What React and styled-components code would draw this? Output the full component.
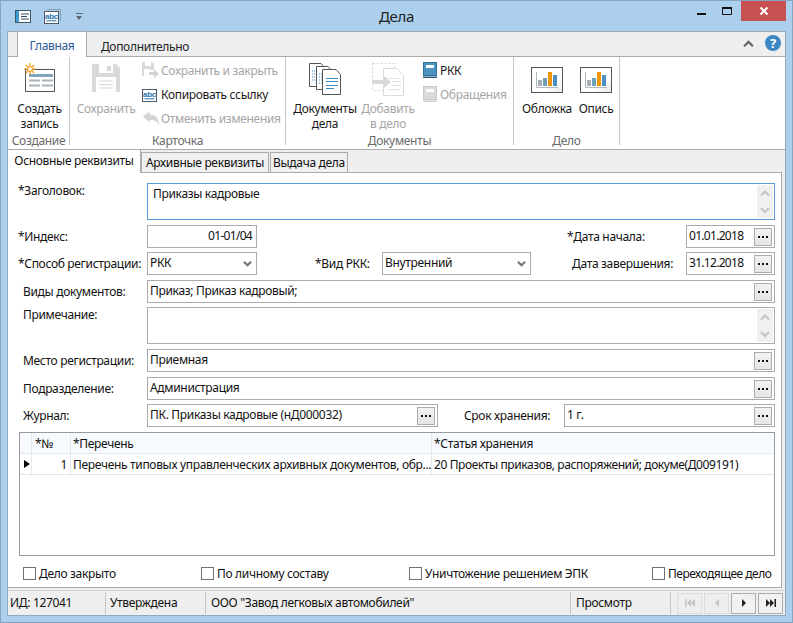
import React from "react";
import styled, { createGlobalStyle } from "styled-components";

const GlobalStyle = createGlobalStyle`
  html, body { margin: 0; padding: 0; overflow: hidden; }
  body { font-family: "Noto Sans", "Open Sans", sans-serif; font-size: 12px; letter-spacing: -0.32px; color: #111; }
`;

const CardIcon = () => (
  <svg width="16" height="13" viewBox="0 0 16 13">
    <rect x="0.5" y="0.5" width="15" height="12" fill="#fff" stroke="#3e5566" />
    <rect x="1" y="1" width="3" height="11" fill="#3f9ad0" />
    <path d="M6 4h8M6 6.5h6M6 9h8" stroke="#2b4a63" strokeWidth="1.2" />
  </svg>
);

const AbcIcon = ({ back = true }) => (
  <svg width="17" height="15" viewBox="0 0 17 15">
    {back && <path d="M3 .5h13.5v11" fill="none" stroke="#7f9db5" />}
    <rect x="0.5" y="2.5" width="14" height="12" fill="#fff" stroke="#4b5a66" />
    <text x="7.5" y="9.5" fontSize="8" fontWeight="700" textAnchor="middle" fill="#2a6fa8" fontFamily="Liberation Sans, sans-serif">abc</text>
    <path d="M2.5 11.8h10" stroke="#2a6fa8" />
  </svg>
);

const NewRecordIcon = () => (
  <svg width="34" height="30" viewBox="0 0 34 30">
    <rect x="2.5" y="7.5" width="29" height="22" fill="#fff" stroke="#555" />
    <rect x="6" y="12" width="24" height="3" fill="#7fa5bb" />
    <path d="M6 18.5h11M19 18.5h11M6 23.5h11M19 23.5h11" stroke="#a8b3ba" strokeWidth="2" />
    <path d="M7 1v12M1 7h12M2.8 2.8l8.4 8.4M11.2 2.8l-8.4 8.4" stroke="#f09609" strokeWidth="1.2" />
    <circle cx="7" cy="7" r="2.4" fill="#fff" stroke="#f09609" />
  </svg>
);

const SaveIcon = () => (
  <svg width="28" height="28" viewBox="0 0 28 28">
    <path d="M0 0h24l4 4v24H0z" fill="#d9d9d9" />
    <rect x="7" y="0" width="14" height="9" fill="#fff" />
    <rect x="15" y="2" width="4" height="5" fill="#d9d9d9" />
    <rect x="4" y="13" width="20" height="15" fill="#fff" />
    <path d="M7 17h14M7 20.5h14M7 24h14" stroke="#d9d9d9" />
  </svg>
);

const SaveCloseIcon = () => (
  <svg width="17" height="16" viewBox="0 0 17 16">
    <path d="M0 0h10l2 2v6H8v6H0z" fill="#d9d9d9" />
    <rect x="3" y="0" width="6" height="4" fill="#fff" />
    <rect x="2" y="7" width="6" height="7" fill="#fff" />
    <path d="M7 10h5V7l5 5-5 4v-3H7z" fill="#d4d4d4" />
  </svg>
);

const UndoIcon = () => (
  <svg width="16" height="15" viewBox="0 0 16 15">
    <path d="M0 5.5L6.5 0v3.5C12 3.5 16 6 16 15c-1.5-5-4.5-6-9.5-6v2.5z" fill="#d6d6d6" />
  </svg>
);

const Sheet = ({ x, y, w = 17, h = 24 }) => (
  <g transform={`translate(${x} ${y})`}>
    <path d={`M.5 .5H${w - 5}L${w - 0.5} 5.5V${h - 0.5}H.5z`} fill="#fff" stroke="#555" />
  </g>
);

const DocsIcon = () => (
  <svg width="33" height="33" viewBox="0 0 33 33">
    <Sheet x={0} y={0} />
    <path d="M3 8h5M3 11h5M3 14h5M3 17h5" stroke="#4a90c4" strokeDasharray="1 1" />
    <Sheet x={7} y={3} />
    <path d="M10 11h5M10 14h5M10 17h5M10 20h5" stroke="#4a90c4" strokeDasharray="1 1" />
    <Sheet x={13} y={6} w={19} h={26} />
    <path d="M17 15.500h12M17 18.500h12M17 22.500h12M17 25.500h8" stroke="#3f8bc4" />
  </svg>
);

const AddDocIcon = () => (
  <svg width="33" height="33" viewBox="0 0 33 33">
    <rect x="0.5" y="0.5" width="22" height="27" fill="#fff" stroke="#d4d4d4" strokeDasharray="2 2" />
    <path d="M11.500 5.500h13l7 7v20h-20z" fill="#fff" stroke="#dcdcdc" />
    <path d="M16 15.500h12M20 18.500h9M20 22.500h9M16 26.500h12" stroke="#e2e2e2" />
    <path d="M0 17h11v-5l8 7-8 7v-5H0z" fill="#d8d8d8" />
  </svg>
);

const BookIcon = ({ off }) => (
  <svg width="14" height="16" viewBox="0 0 14 16">
    <rect x="0.500" y="0.500" width="13" height="13" fill={off ? "#dadada" : "#4d93bf"} stroke={off ? "#c9c9c9" : "#2f6f99"} />
    <rect x="3" y="3" width="8" height="3" fill="#fff" />
    <rect x="0" y="14.500" width="14" height="1.500" fill={off ? "#cfcfcf" : "#2a5f85"} />
  </svg>
);

const ChartIcon = ({ first = "#a8b0b5", second = "#6f9fbb" }) => (
  <svg width="32" height="26" viewBox="0 0 32 26">
    <defs>
      <linearGradient id="chartBg" x1="0" y1="0" x2="1" y2="1">
        <stop offset="0.6" stopColor="#fff" />
        <stop offset="1" stopColor="#e6ebf0" />
      </linearGradient>
    </defs>
    <rect x="0.500" y="0.500" width="31" height="25" fill="url(#chartBg)" stroke="#555" />
    <path d="M5.500 5v15.500H27" fill="none" stroke="#b4b9bc" />
    <rect x="7" y="13" width="4" height="6" fill={first} />
    <rect x="12" y="11" width="4" height="8" fill={second} />
    <rect x="17" y="5" width="4" height="14" fill="#f09609" />
    <rect x="22" y="8" width="4" height="11" fill="#4a8fc4" />
  </svg>
);

const Chevron = ({ up, color = "#777", size = 9, weight = 2.4 }) => (
  <svg width={size} height={size} viewBox="0 0 10 10">
    <path d={up ? "M1 7.500L5 3.500l4 4" : "M1 3L5 7l4-4"} fill="none" stroke={color} strokeWidth={weight} />
  </svg>
);

const NavGlyph = ({ dir, color }) => (
  <svg width="10" height="8" viewBox="0 0 10 8">
    {dir === "first" && <path d="M0 0h1.500v8H0zM6 0v8L2 4zM10 0v8L6 4z" fill={color} />}
    {dir === "prev" && <path d="M7 0v8L3 4z" fill={color} />}
    {dir === "next" && <path d="M3 0v8l4-4z" fill={color} />}
    {dir === "last" && <path d="M8.500 0H10v8H8.500zM0 0v8l4-4zM4 0v8l4-4z" fill={color} />}
  </svg>
);

const Page = styled.div`
  width: 793px;
  height: 623px;
  box-sizing: border-box;
  background: #abcfec;
  border: 1px solid #86a5c0;
  display: flex;
  flex-direction: column;
  overflow: hidden;
`;

const TitleBar = styled.div`
  height: 30px;
  flex: none;
  display: grid;
  grid-template-columns: 1fr auto 1fr;
  align-items: start;
`;

const QuickAccess = styled.div`
  display: flex;
  align-items: center;
  height: 13px;
  padding: 9px 0 0 14px;
  gap: 13px;
`;

const QuickDrop = styled.span`
  margin-left: 2px;
  width: 7px;
  height: 6px;
  border-top: 1px solid #666;
  position: relative;
  &::after {
    content: "";
    position: absolute;
    left: 0;
    top: 2px;
    border: 3.500px solid transparent;
    border-top: 4px solid #666;
    border-bottom: 0;
  }
`;

const WindowTitle = styled.div`
  font-size: 15px;
  line-height: 20px;
  margin-top: 5px;
  color: #222;
`;

const Caption = styled.div`
  display: flex;
  justify-content: flex-end;
  padding-right: 6px;
`;

const CaptionButton = styled.div`
  width: ${(p) => p.$w}px;
  height: 20px;
  display: flex;
  align-items: center;
  justify-content: center;
  background: ${(p) => (p.$close ? "#c75050" : "transparent")};
`;

const Client = styled.div`
  flex: 1;
  margin: 0 6px 6px 6px;
  border: 1px solid #8fa9bf;
  border-top-color: #a3a9ae;
  background: #efefef;
  display: flex;
  flex-direction: column;
  min-height: 0;
`;

const TabStrip = styled.div`
  height: 25px;
  flex: none;
  box-sizing: border-box;
  border-bottom: 1px solid #ababab;
  display: flex;
  align-items: flex-end;
  padding-left: 9px;
`;

const RibbonTab = styled.div`
  width: ${(p) => p.$w}px;
  height: ${(p) => (p.$active ? 26 : 25)}px;
  box-sizing: border-box;
  margin-bottom: -1px;
  padding-top: 5px;
  line-height: 18px;
  text-align: center;
  background: ${(p) => (p.$active ? "#fff" : "transparent")};
  border: 1px solid ${(p) => (p.$active ? "#ababab" : "transparent")};
  border-bottom: 0;
  color: ${(p) => (p.$active ? "#2b579a" : "#222")};
`;

const StripTools = styled.div`
  margin-left: auto;
  height: 22px;
  align-self: flex-start;
  display: flex;
  align-items: center;
  gap: 11px;
  padding-right: 4px;
`;

const HelpBadge = styled.div`
  width: 16px;
  height: 16px;
  border-radius: 50%;
  background: #3b87c4;
  color: #fff;
  font-weight: 700;
  font-size: 13px;
  line-height: 16px;
  text-align: center;
`;

const Ribbon = styled.div`
  height: 93px;
  flex: none;
  box-sizing: border-box;
  background: #fff;
  border-bottom: 1px solid #ababab;
  display: flex;
`;

const Group = styled.div`
  width: ${(p) => p.$w}px;
  height: 88px;
  flex: none;
  box-sizing: border-box;
  border-right: 1px solid #c8c8c8;
  display: flex;
  flex-direction: column;
`;

const GroupBody = styled.div`
  height: 76px;
  flex: none;
  display: flex;
  padding-left: ${(p) => p.$left || 0}px;
`;

const GroupLabel = styled.div`
  height: 12px;
  line-height: 16px;
  text-align: center;
  color: #6a6a6a;
  white-space: nowrap;
`;

const LargeButton = styled.div`
  width: ${(p) => p.$w}px;
  flex: none;
  display: flex;
  flex-direction: column;
  align-items: center;
  text-align: center;
  line-height: 15px;
  color: ${(p) => (p.$off ? "#a6a6a6" : "#1a1a1a")};
`;

const LargeIcon = styled.div`
  height: 44px;
  flex: none;
  box-sizing: border-box;
  display: flex;
  align-items: flex-end;
  padding-bottom: ${(p) => p.$pb}px;
`;

const SmallColumn = styled.div`
  display: flex;
  flex-direction: column;
  flex: none;
  gap: 4px;
  padding-top: 3px;
  margin-left: ${(p) => p.$left || 0}px;
`;

const SmallButton = styled.div`
  height: 20px;
  display: flex;
  align-items: center;
  gap: 2px;
  white-space: nowrap;
  color: ${(p) => (p.$off ? "#a6a6a6" : "#1a1a1a")};
`;

const SmallIcon = styled.span`
  width: 17px;
  display: flex;
  justify-content: center;
`;

const TabRow = styled.div`
  height: 22px;
  flex: none;
  display: flex;
  align-items: flex-end;
`;

const PageTab = styled.div`
  height: ${(p) => (p.$active ? 23 : 20)}px;
  width: ${(p) => p.$w}px;
  flex: none;
  box-sizing: border-box;
  margin-bottom: ${(p) => (p.$active ? -1 : 0)}px;
  margin-right: ${(p) => p.$gap || 0}px;
  position: relative;
  z-index: ${(p) => (p.$active ? 1 : 0)};
  background: ${(p) => (p.$active ? "#fff" : "#f0f0f0")};
  border: 1px solid #ababab;
  border-width: ${(p) => (p.$active ? "0 1px 0 0" : "1px 1px 0 1px")};
  text-align: center;
  line-height: ${(p) => (p.$active ? 22 : 20)}px;
  white-space: nowrap;
`;

const Panel = styled.div`
  height: 416px;
  flex: none;
  margin-right: 3px;
  box-sizing: border-box;
  background: #fff;
  border: 1px solid #ababab;
  border-left: 0;
  padding: 10px 6px 0 10px;
  display: flex;
  flex-direction: column;
`;

const Row = styled.div`
  display: flex;
  align-items: flex-start;
  flex: none;
  margin-top: ${(p) => p.$top || 0}px;
  height: ${(p) => p.$h || 23}px;
`;

const Label = styled.div`
  box-sizing: border-box;
  width: ${(p) => p.$w}px;
  flex: none;
  padding-left: ${(p) => p.$indent || 0}px;
  padding-top: ${(p) => (p.$top === undefined ? 4 : p.$top)}px;
  line-height: 16px;
  white-space: nowrap;
  color: #111;
`;

const Spacer = styled.div`
  flex: 1;
`;

const Field = styled.div`
  box-sizing: border-box;
  height: 100%;
  width: ${(p) => (p.$w ? `${p.$w}px` : "auto")};
  flex: ${(p) => (p.$w ? "none" : 1)};
  border: 1px solid ${(p) => (p.$focus ? "#5b9bd5" : "#ababab")};
  display: flex;
  align-items: ${(p) => (p.$tall ? "flex-start" : "center")};
  padding: ${(p) => (p.$focus ? "0 1px 0 5px" : "0 1px 0 2px")};
  line-height: 16px;
  white-space: nowrap;
`;

const FieldText = styled.span`
  flex: 1;
  min-width: 0;
  text-align: ${(p) => (p.$right ? "right" : "left")};
  padding-right: ${(p) => (p.$right ? 3 : 0)}px;
  margin-top: ${(p) => (p.$top ? `${p.$top}px` : "-1px")};
  letter-spacing: ${(p) => (p.$digits ? "-0.7px" : "inherit")};
`;

const DotsButton = styled.div`
  box-sizing: border-box;
  width: 18px;
  height: 18px;
  flex: none;
  border: 1px solid #adadad;
  background: linear-gradient(#f2f2f2, #e5e5e5);
  display: flex;
  align-items: center;
  justify-content: center;
  gap: 2px;
  margin-right: 1px;
  & > i {
    display: block;
    width: 2px;
    height: 2px;
    background: #111;
  }
`;

const Dots = () => (
  <DotsButton>
    <i />
    <i />
    <i />
  </DotsButton>
);

const ScrollBar = styled.div`
  align-self: stretch;
  width: 16px;
  flex: none;
  margin: 1px 0;
  background: #f0f0f0;
  display: flex;
  flex-direction: column;
  justify-content: space-between;
  align-items: center;
  padding: 3px 0;
  box-sizing: border-box;
`;

const Select = styled(Field)`
  padding-right: 4px;
`;

const Grid = styled.div`
  margin: 5px 0 0 1px;
  height: 124px;
  box-sizing: border-box;
  border: 1px solid #9a9a9a;
  flex: none;
`;

const GridRow = styled.div`
  display: grid;
  grid-template-columns: 12px 39px 361px 1fr;
  height: 21px;
  box-sizing: border-box;
  border-bottom: 1px solid ${(p) => (p.$head ? "#e3e9f1" : "#dfe4ea")};
  background: ${(p) => (p.$head ? "#f6f9fd" : "#fff")};
  line-height: 19px;
`;

const GridCell = styled.div`
  box-sizing: border-box;
  border-right: ${(p) => (p.$last ? 0 : "1px solid #e3e9f1")};
  padding: 0 ${(p) => (p.$right ? 3 : 0)}px 0 ${(p) => (p.$pad === undefined ? 2 : p.$pad)}px;
  white-space: nowrap;
  overflow: hidden;
  display: flex;
  align-items: center;
  justify-content: ${(p) => (p.$right ? "flex-end" : "flex-start")};
  letter-spacing: ${(p) => (p.$tight ? "-0.4px" : "inherit")};
`;

const Marker = styled.span`
  border: 4.500px solid transparent;
  border-left: 6px solid #000;
  border-right: 0;
`;

const CheckRow = styled.div`
  margin-top: 11px;
  padding-left: 5px;
  height: 13px;
  display: flex;
`;

const Check = styled.label`
  display: flex;
  align-items: center;
  gap: 3px;
  line-height: 13px;
  white-space: nowrap;
  width: ${(p) => p.$w}px;
  flex: none;
  letter-spacing: ${(p) => (p.$tight ? "-0.5px" : "inherit")};
  &::before {
    content: "";
    box-sizing: border-box;
    width: 13px;
    height: 13px;
    flex: none;
    border: 1px solid #707070;
    background: #fff;
  }
`;

const StatusBar = styled.div`
  flex: 1;
  margin-top: 2px;
  border-top: 1px solid #d0d0d0;
  display: flex;
  align-items: center;
  min-height: 0;
`;

const StatusCell = styled.div`
  width: ${(p) => p.$w}px;
  height: 22px;
  box-sizing: border-box;
  flex: none;
  padding-left: ${(p) => p.$left || 5}px;
  line-height: 21px;
  white-space: nowrap;
  border-right: 1px solid #c4c4c4;
`;

const NavGroup = styled.div`
  display: flex;
  gap: 2px;
  padding-left: 6px;
`;

const NavButton = styled.div`
  width: 25px;
  height: 21px;
  box-sizing: border-box;
  border: 1px solid ${(p) => (p.$off ? "#dcdcdc" : "#adadad")};
  background: ${(p) => (p.$off ? "#eeeeee" : "#f1f1f1")};
  display: flex;
  align-items: center;
  justify-content: center;
`;

export default function App() {
  return (
    <>
      <GlobalStyle />
      <Page>
        <TitleBar>
          <QuickAccess>
            <CardIcon />
            <AbcIcon />
            <QuickDrop />
          </QuickAccess>
          <WindowTitle>Дела</WindowTitle>
          <Caption>
            <CaptionButton $w={26}>
              <svg width="9" height="9" viewBox="0 0 9 9"><rect x="0" y="6" width="9" height="2" fill="#111" /></svg>
            </CaptionButton>
            <CaptionButton $w={27}>
              <svg width="11" height="9" viewBox="0 0 11 9"><path d="M.5 .5h9v7h-9z" fill="none" stroke="#111" /><rect x="0" y="0" width="10" height="2" fill="#111" /></svg>
            </CaptionButton>
            <CaptionButton $w={45} $close>
              <svg width="10" height="10" viewBox="0 0 10 10"><path d="M1.500 1.500l7 7M8.500 1.500l-7 7" stroke="#fff" strokeWidth="2" /></svg>
            </CaptionButton>
          </Caption>
        </TitleBar>
        <Client>
          <TabStrip>
            <RibbonTab $active $w={70}>Главная</RibbonTab>
            <RibbonTab $w={116}>Дополнительно</RibbonTab>
            <StripTools>
              <Chevron up size={11} color="#666" weight={2} />
              <HelpBadge>?</HelpBadge>
            </StripTools>
          </TabStrip>
          <Ribbon>
            <Group $w={62}>
              <GroupBody $left={1}>
                <LargeButton $w={61}>
                  <LargeIcon $pb={9}><NewRecordIcon /></LargeIcon>
                  Создать<br />запись
                </LargeButton>
              </GroupBody>
              <GroupLabel>Создание</GroupLabel>
            </Group>
            <Group $w={216}>
              <GroupBody>
                <LargeButton $w={72} $off>
                  <LargeIcon $pb={9}><SaveIcon /></LargeIcon>
                  Сохранить
                </LargeButton>
                <SmallColumn>
                  <SmallButton $off><SmallIcon><SaveCloseIcon /></SmallIcon>Сохранить и закрыть</SmallButton>
                  <SmallButton><SmallIcon><AbcIcon back={false} /></SmallIcon>Копировать ссылку</SmallButton>
                  <SmallButton $off><SmallIcon><UndoIcon /></SmallIcon>Отменить изменения</SmallButton>
                </SmallColumn>
              </GroupBody>
              <GroupLabel>Карточка</GroupLabel>
            </Group>
            <Group $w={228}>
              <GroupBody $left={6}>
                <LargeButton $w={66}>
                  <LargeIcon $pb={5}><DocsIcon /></LargeIcon>
                  Документы<br />дела
                </LargeButton>
                <LargeButton $w={60} $off>
                  <LargeIcon $pb={5}><AddDocIcon /></LargeIcon>
                  Добавить<br />в дело
                </LargeButton>
                <SmallColumn $left={3}>
                  <SmallButton><SmallIcon><BookIcon /></SmallIcon>РКК</SmallButton>
                  <SmallButton $off><SmallIcon><BookIcon off /></SmallIcon>Обращения</SmallButton>
                </SmallColumn>
              </GroupBody>
              <GroupLabel>Документы</GroupLabel>
            </Group>
            <Group $w={106}>
              <GroupBody $left={7}>
                <LargeButton $w={52}>
                  <LargeIcon $pb={8}><ChartIcon /></LargeIcon>
                  Обложка
                </LargeButton>
                <LargeButton $w={46}>
                  <LargeIcon $pb={8}><ChartIcon /></LargeIcon>
                  Опись
                </LargeButton>
              </GroupBody>
              <GroupLabel>Дело</GroupLabel>
            </Group>
          </Ribbon>
          <TabRow>
            <PageTab $active $w={133}>Основные реквизиты</PageTab>
            <PageTab $w={128} $gap={1}>Архивные реквизиты</PageTab>
            <PageTab $w={78}>Выдача дела</PageTab>
          </TabRow>
          <Panel>
            <Row $h={37}>
              <Label $w={129} $top={0}>*Заголовок:</Label>
              <Field $focus $tall>
                <FieldText $top={2}>Приказы кадровые</FieldText>
                <ScrollBar>
                  <Chevron up color="#c4c4c4" size={10} weight={2} />
                  <Chevron color="#c4c4c4" size={10} weight={2} />
                </ScrollBar>
              </Field>
            </Row>
            <Row $top={5}>
              <Label $w={129}>*Индекс:</Label>
              <Field $w={110}><FieldText $right $digits>01-01/04</FieldText></Field>
              <Spacer />
              <Label $w={119}>*Дата начала:</Label>
              <Field $w={89}><FieldText $digits>01.01.2018</FieldText><Dots /></Field>
            </Row>
            <Row $top={4}>
              <Label $w={129}>*Способ регистрации:</Label>
              <Select $w={110}>
                <FieldText>РКК</FieldText>
                <Chevron />
              </Select>
              <Label $w={125} $indent={58}>*Вид РКК:</Label>
              <Select $w={149}>
                <FieldText>Внутренний</FieldText>
                <Chevron />
              </Select>
              <Label $w={155} $indent={41}>Дата завершения:</Label>
              <Field $w={89}><FieldText $digits>31.12.2018</FieldText><Dots /></Field>
            </Row>
            <Row $top={5}>
              <Label $w={129} $indent={5}>Виды документов:</Label>
              <Field><FieldText>Приказ; Приказ кадровый;</FieldText><Dots /></Field>
            </Row>
            <Row $top={4} $h={37}>
              <Label $w={129} $indent={5} $top={0}>Примечание:</Label>
              <Field $tall>
                <FieldText />
                <ScrollBar>
                  <Chevron up color="#c4c4c4" size={10} weight={2} />
                  <Chevron color="#c4c4c4" size={10} weight={2} />
                </ScrollBar>
              </Field>
            </Row>
            <Row $top={5}>
              <Label $w={129} $indent={5}>Место регистрации:</Label>
              <Field><FieldText>Приемная</FieldText><Dots /></Field>
            </Row>
            <Row $top={5}>
              <Label $w={129} $indent={5}>Подразделение:</Label>
              <Field><FieldText>Администрация</FieldText><Dots /></Field>
            </Row>
            <Row $top={4}>
              <Label $w={129} $indent={5}>Журнал:</Label>
              <Field $w={291}><FieldText>ПК. Приказы кадровые (нД000032)</FieldText><Dots /></Field>
              <Label $w={126} $indent={26}>Срок хранения:</Label>
              <Field><FieldText>1 г.</FieldText><Dots /></Field>
            </Row>
            <Grid>
              <GridRow $head>
                <GridCell />
                <GridCell $pad={3}>*№</GridCell>
                <GridCell>*Перечень</GridCell>
                <GridCell $last>*Статья хранения</GridCell>
              </GridRow>
              <GridRow>
                <GridCell $pad={4}><Marker /></GridCell>
                <GridCell $right>1</GridCell>
                <GridCell>Перечень типовых управленческих архивных документов, обр...</GridCell>
                <GridCell $last $tight>20 Проекты приказов, распоряжений; докуме(Д009191)</GridCell>
              </GridRow>
            </Grid>
            <CheckRow>
              <Check $w={178}>Дело закрыто</Check>
              <Check $w={208}>По личному составу</Check>
              <Check $w={243}>Уничтожение решением ЭПК</Check>
              <Check $w={120} $tight>Переходящее дело</Check>
            </CheckRow>
          </Panel>
          <StatusBar>
            <StatusCell $w={98} $left={2}>ИД: 127041</StatusCell>
            <StatusCell $w={100} $left={4}>Утверждена</StatusCell>
            <StatusCell $w={365}>ООО "Завод легковых автомобилей"</StatusCell>
            <StatusCell $w={100}>Просмотр</StatusCell>
            <NavGroup>
              <NavButton $off><NavGlyph dir="first" color="#c4c4c4" /></NavButton>
              <NavButton $off><NavGlyph dir="prev" color="#c4c4c4" /></NavButton>
              <NavButton><NavGlyph dir="next" color="#222" /></NavButton>
              <NavButton><NavGlyph dir="last" color="#222" /></NavButton>
            </NavGroup>
          </StatusBar>
        </Client>
      </Page>
    </>
  );
}
